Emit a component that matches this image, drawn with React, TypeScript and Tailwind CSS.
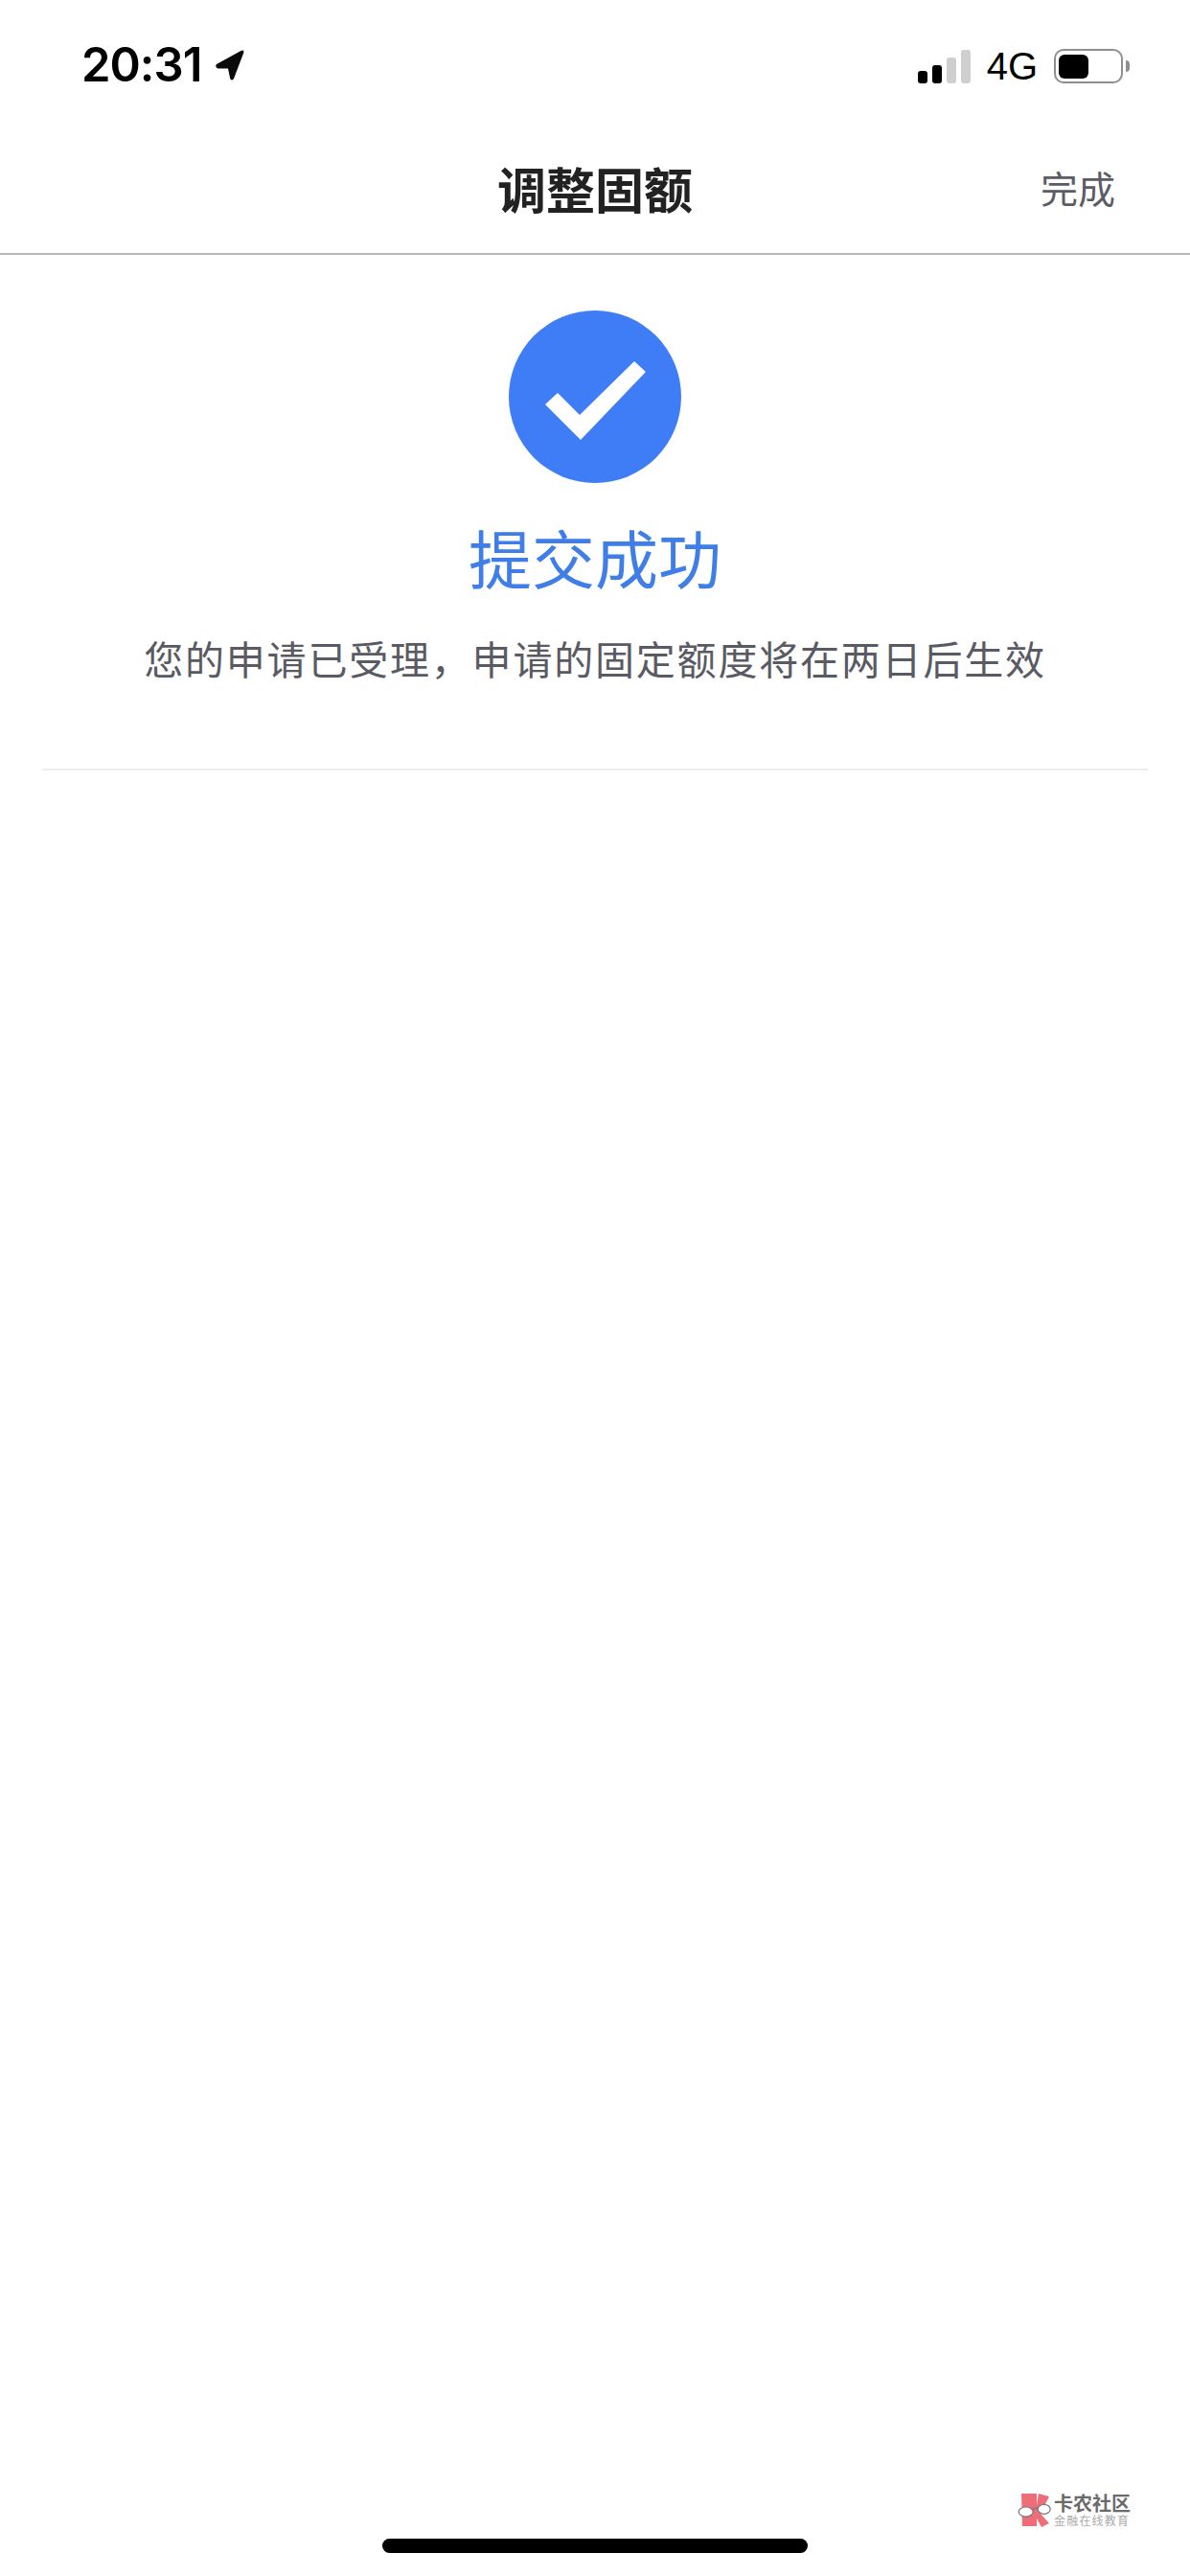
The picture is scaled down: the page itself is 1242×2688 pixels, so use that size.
const CJK = "font-['Noto_Sans_CJK_SC','Noto_Sans',sans-serif]";

const LocationArrow = () => (
  <svg width="30" height="32" viewBox="0 0 30 32" className="ml-[15px]">
    <path
      d="M1 15 L26.5 1 Q30 -0.5 29.3 3 L19 30 Q17 33 15.2 30 L13 19.5 L2.5 19.5 Q-1 18 1 15 Z"
      fill="#0a0a0a"
    />
  </svg>
);

const SignalBars = () => (
  <div className="flex items-end gap-[5px]">
    <div className="h-[13px] w-[10px] rounded-[3px] bg-black" />
    <div className="h-[19px] w-[10px] rounded-[3px] bg-black" />
    <div className="h-[27px] w-[10px] rounded-[3px] bg-[#cfcfcf]" />
    <div className="h-[35px] w-[10px] rounded-[3px] bg-[#cfcfcf]" />
  </div>
);

const Battery = () => (
  <div className="flex items-center">
    <div className="flex h-[36px] w-[72px] items-center rounded-[10px] border-[2.5px] border-[#8e8e8e] pl-[3px]">
      <div className="h-[25px] w-[31px] rounded-[6px] bg-black" />
    </div>
    <div className="ml-[3px] h-[12px] w-[4px] rounded-r-[4px] bg-[#8e8e8e]" />
  </div>
);

const CheckCircle = () => (
  <svg width="180" height="180" viewBox="0 0 180 180">
    <circle cx="90" cy="90" r="90" fill="#3f7df6" />
    <path d="M38 98 L51 86 L74 109 L131 53 L143 64 L75 135 Z" fill="#ffffff" />
  </svg>
);

const WatermarkLogo = () => (
  <svg width="36" height="38" viewBox="0 0 36 38">
    <path d="M4 2 H20 V14 L22 2 L33 5 L27 17 L24 23 L33 33 L25 37 L20 28 V36 H5 Z" fill="#ee6d78" />
    <path d="M15 19 Q19 16 21 18" fill="none" stroke="#777777" strokeWidth="1.2" />
    <ellipse cx="8.7" cy="21" rx="7.5" ry="5" fill="#ffffff" stroke="#777777" strokeWidth="1.2" />
    <ellipse cx="27.7" cy="18.3" rx="6.5" ry="5" fill="#ffffff" stroke="#777777" strokeWidth="1.2" />
  </svg>
);

export default function App() {
  return (
    <div className={`relative flex min-h-[2688px] w-[1242px] flex-col bg-white ${CJK}`}>
      {/* status bar */}
      <div className="flex h-[134px] items-start justify-between pl-[85px] pr-[63px] pt-[44px]">
        <div className="flex items-center">
          <span className="font-['Inter',sans-serif] text-[49px] leading-[48px] font-semibold tracking-[-1px] text-black">
            20:31
          </span>
          <LocationArrow />
        </div>
        <div className="flex items-center pt-[5px]">
          <SignalBars />
          <span className="ml-[17px] font-['Liberation_Sans',sans-serif] text-[40px] leading-[40px] text-black">
            4G
          </span>
          <div className="ml-[17px]">
            <Battery />
          </div>
        </div>
      </div>

      {/* nav */}
      <div className="relative flex h-[132px] items-center justify-center border-b-2 border-[#b8b8b8] pb-[6px]">
        <h1 className="text-[51px] leading-[60px] font-semibold text-[#222222]">调整固额</h1>
        <span className="absolute right-[78px] top-[36px] text-[39px] leading-[50px] text-[#5c5c66]">
          完成
        </span>
      </div>

      {/* result */}
      <div className="mx-[44px] flex flex-col items-center border-b-2 border-[#eeeeee] pt-[58px] pb-[88px]">
        <CheckCircle />
        <h2 className="mt-[36px] text-[66px] leading-[80px] font-normal text-[#3f7de8]">提交成功</h2>
        <p className="mt-[38px] text-[41px] leading-[56px] tracking-[1.8px] whitespace-nowrap text-[#5a5a64]">
          您的申请已受理，申请的固定额度将在两日后生效
        </p>
      </div>

      <div className="mt-auto flex justify-center pb-[24px]">
        <div className="h-[15px] w-[444px] rounded-full bg-black" />
      </div>

      {/* watermark */}
      <div className="absolute left-[1062px] top-[2600px] flex items-center gap-[2px]">
        <WatermarkLogo />
        <div className="flex w-[80px] flex-col pt-[1px]">
          <span className="text-[20px] leading-[20px] font-bold whitespace-nowrap text-[#6b6b6b]">卡农社区</span>
          <span className="mt-[1px] text-[12px] leading-[14px] tracking-[1.2px] whitespace-nowrap text-[#aaaaaa]">
            金融在线教育
          </span>
        </div>
      </div>
    </div>
  );
}
